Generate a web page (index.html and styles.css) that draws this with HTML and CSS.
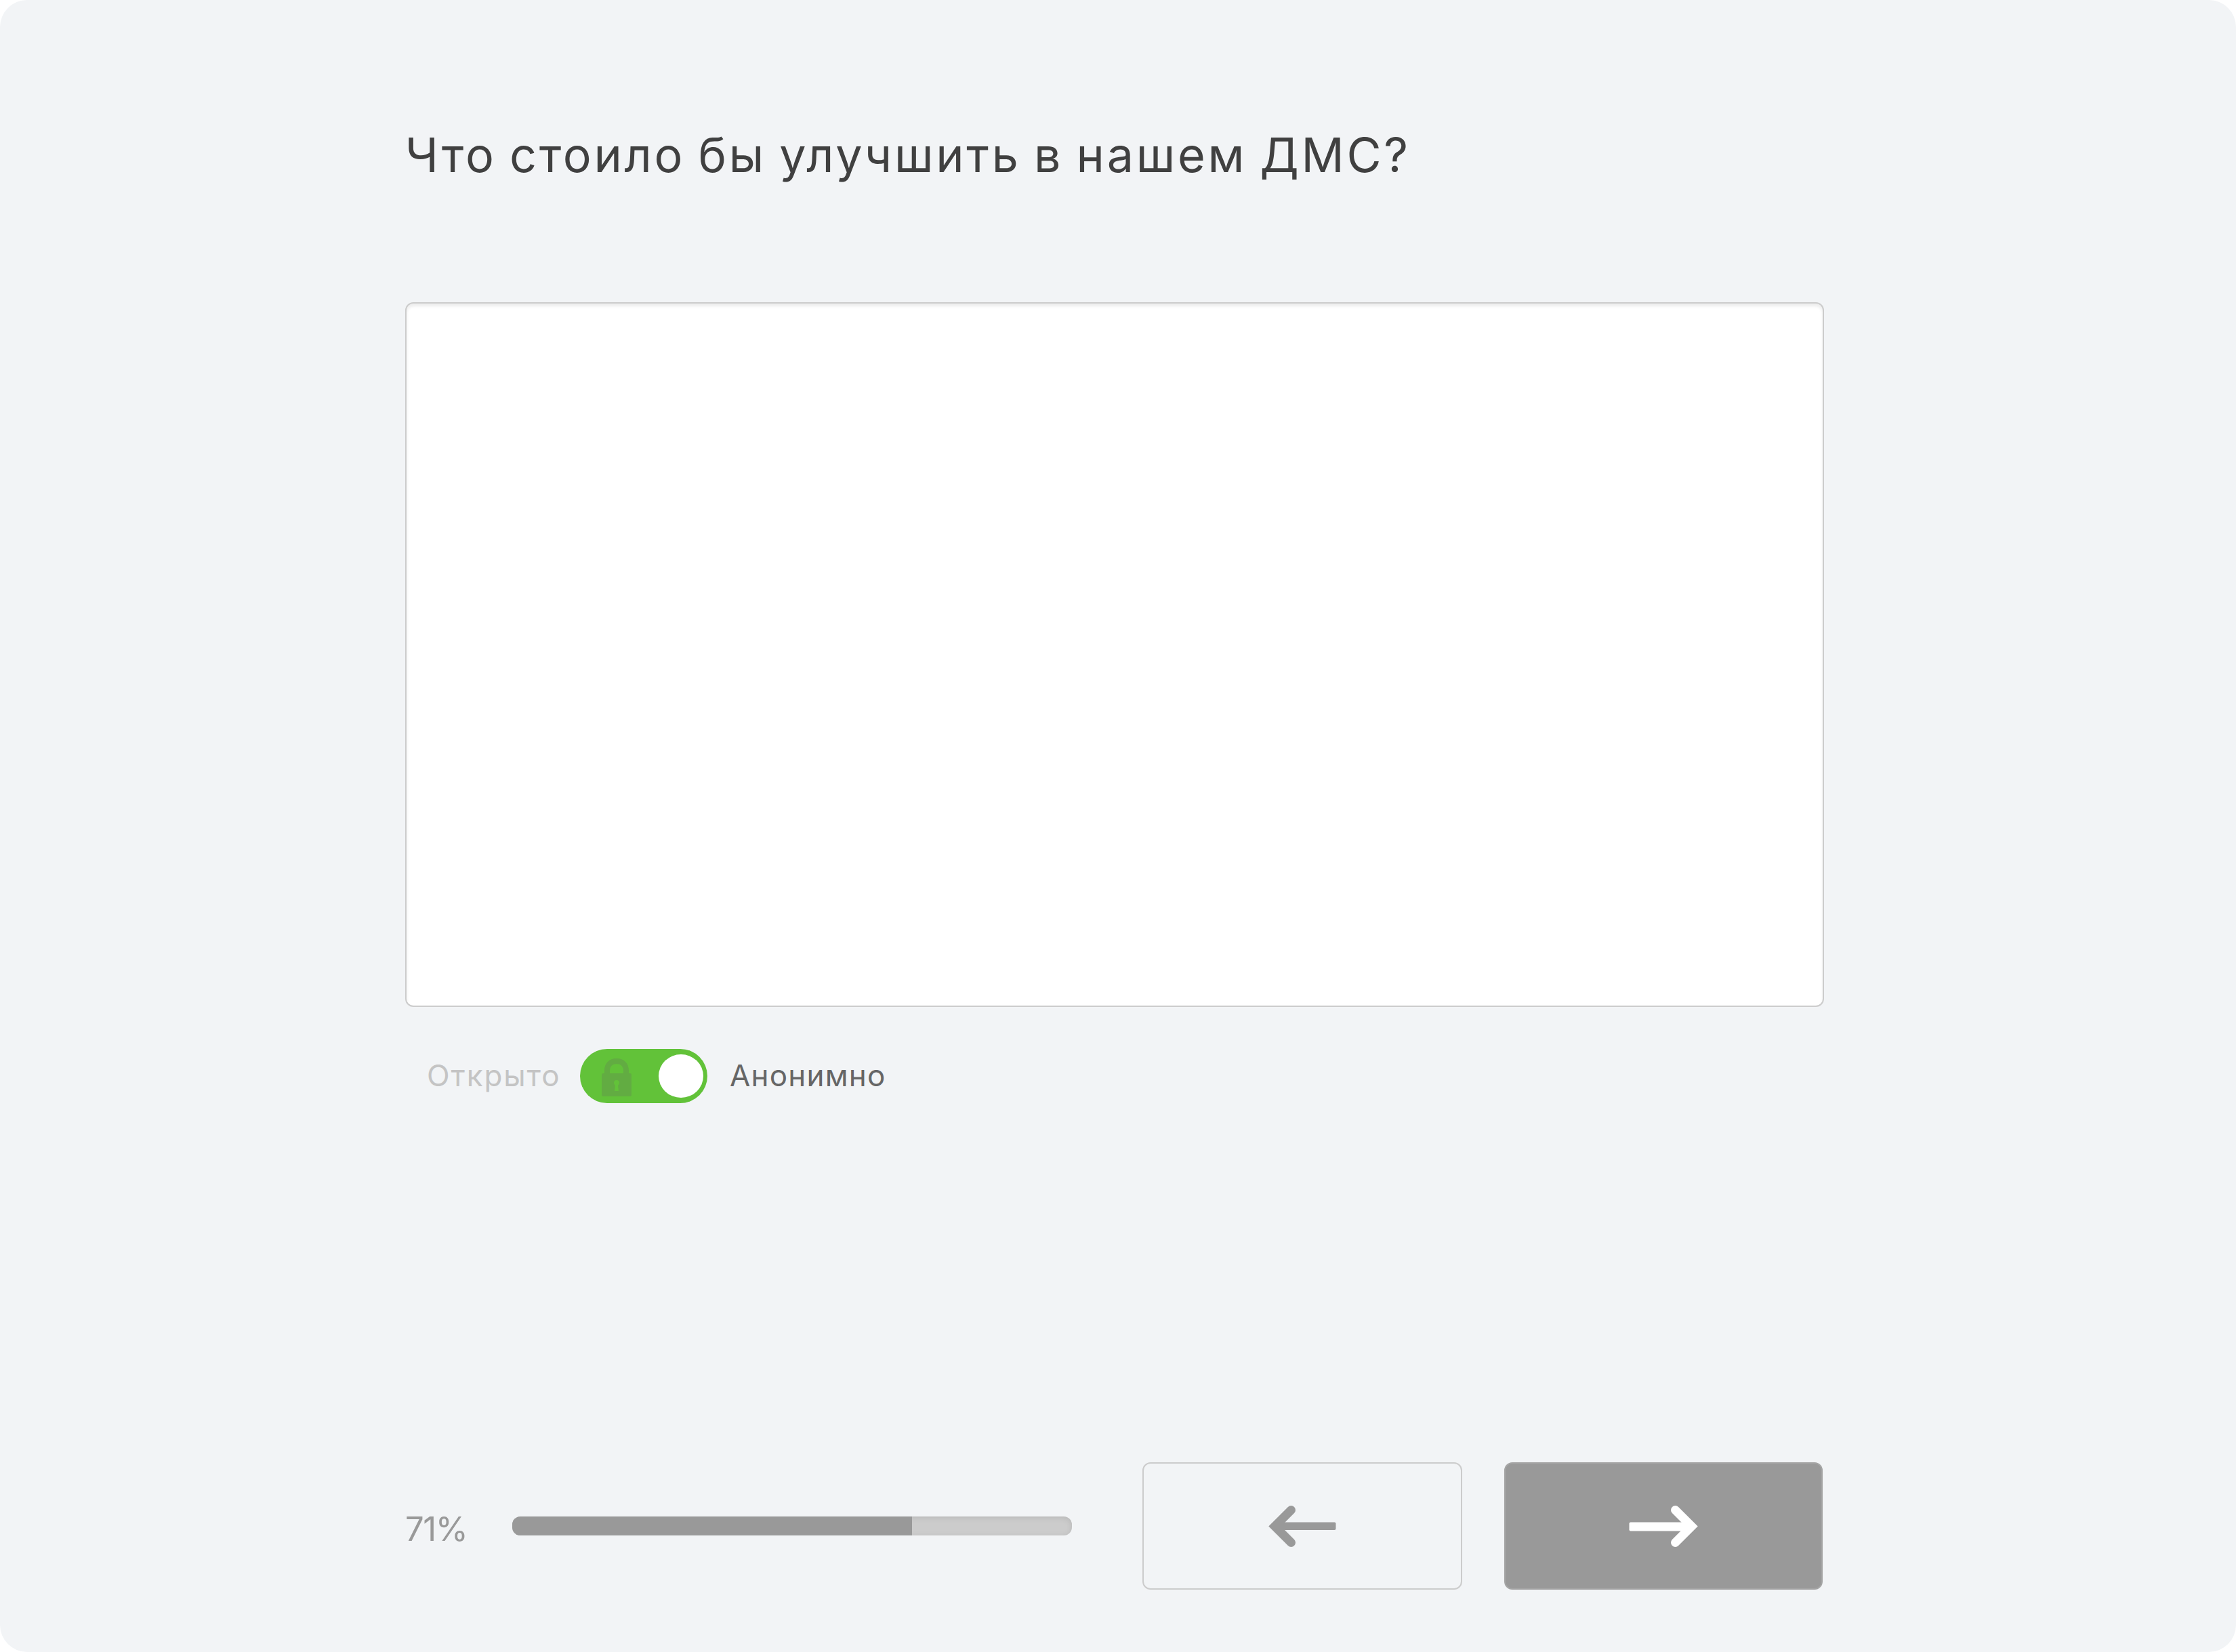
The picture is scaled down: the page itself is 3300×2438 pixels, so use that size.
FILE: index.html
```html
<!DOCTYPE html>
<html lang="ru">
<head>
  <meta charset="UTF-8">
  <meta name="viewport" content="width=device-width, initial-scale=1.0">
  <title>Опрос</title>
  <link rel="stylesheet" href="styles.css">
</head>
<body>
  <main class="survey">
    <h1 class="question">Что стоило бы улучшить в нашем ДМС?</h1>

    <textarea class="answer" aria-label="Ответ"></textarea>

    <div class="privacy">
      <span class="privacy-open">Открыто</span>
      <button class="switch" type="button" role="switch" aria-checked="true" aria-label="Анонимно">
        <svg class="lock" viewBox="0 0 44 56">
          <path fill-rule="evenodd" d="M4 22V18C4 7 11 0 22 0S40 7 40 18V22H42Q44 22 44 24V54Q44 56 42 56H2Q0 56 0 54V24Q0 22 2 22ZM12 22H32V18C32 12 28 8 22 8S12 12 12 18ZM22 32C19 32 18 34 18 36Q18 38 20 40L19 48H25L24 40Q26 38 26 36C26 34 25 32 22 32Z"/>
        </svg>
        <span class="knob"></span>
      </button>
      <span class="privacy-anonymous">Анонимно</span>
    </div>

    <footer class="footer">
      <span class="percent">71%</span>
      <div class="progress">
        <div class="progress-bar" style="width: 71.43%"></div>
      </div>
      <button class="nav-button prev" type="button" aria-label="Назад">
        <svg class="arrow" viewBox="0 0 100 64">
          <path d="M33.5 8.5L9.5 32.5L33.5 56.5"/>
          <rect x="10" y="26.5" width="89.5" height="11.5" rx="2"/>
        </svg>
      </button>
      <button class="nav-button next" type="button" aria-label="Далее">
        <svg class="arrow" viewBox="0 0 100 64">
          <path d="M67.5 8.5L91.5 32.5L67.5 56.5"/>
          <rect x="-0.5" y="26.5" width="91" height="13" rx="2"/>
        </svg>
      </button>
    </footer>
  </main>
</body>
</html>
```

FILE: styles.css
```css
* {
  box-sizing: border-box;
}

body {
  margin: 0;
  background: #fff;
  font-family: Inter, "Open Sans", sans-serif;
}

.survey {
  display: flex;
  flex-direction: column;
  height: 2438px;
  padding: 180px 608px 92px 598px;
  border-radius: 40px;
  background: #f2f4f6;
}

.question {
  height: 266px;
  margin: 0;
  font-size: 70px;
  font-weight: 400;
  line-height: 98px;
  letter-spacing: 3.7px;
  word-spacing: -4px;
  white-space: nowrap;
  color: #404040;
}

.answer {
  display: block;
  width: 2094px;
  height: 1040px;
  border: 2px solid #ccc;
  border-radius: 12px;
  background: #fff;
  box-shadow: inset 0 4px 4px rgba(0, 0, 0, 0.075);
  resize: none;
}

.privacy {
  display: flex;
  align-items: center;
  height: 80px;
  margin-top: 62px;
  padding-left: 32px;
  font-size: 44px;
  white-space: nowrap;
}

.privacy-open {
  width: 226px;
  padding-bottom: 3px;
  letter-spacing: 1.9px;
  color: #c4c4c4;
}

.privacy-anonymous {
  margin-left: 33px;
  padding-bottom: 3px;
  letter-spacing: 1.2px;
  color: #666;
}

.switch {
  display: flex;
  align-items: center;
  justify-content: space-between;
  width: 188px;
  height: 80px;
  padding: 0 6px 0 32px;
  border: 0;
  border-radius: 40px;
  background: #62c239;
}

.lock {
  width: 44px;
  height: 56px;
  margin-top: 4px;
  fill: #62ac42;
}

.knob {
  width: 66px;
  height: 64px;
  border-radius: 50%;
  background: #fff;
}

.footer {
  display: flex;
  align-items: center;
  height: 188px;
  margin-top: auto;
}

.percent {
  width: 158px;
  padding-top: 8px;
  font-size: 49px;
  letter-spacing: -1.5px;
  color: #999;
}

.progress {
  width: 826px;
  height: 28px;
  margin-right: 104px;
  overflow: hidden;
  border-radius: 12px;
  background: #ccc;
  box-shadow: inset 0 2px 8px rgba(0, 0, 0, 0.1);
}

.progress-bar {
  height: 100%;
  background: #999;
}

.nav-button {
  display: flex;
  align-items: center;
  justify-content: center;
  width: 472px;
  height: 188px;
  padding: 0;
  border: 2px solid #ccc;
  border-radius: 12px;
}

.prev {
  background: transparent;
  color: #999;
}

.next {
  width: 470px;
  margin-left: 62px;
  border-color: #a5a5a5;
  background: #999;
  color: #fff;
}

.arrow {
  width: 100px;
  height: 64px;
  overflow: visible;
  fill: currentColor;
}

.arrow path {
  fill: none;
  stroke: currentColor;
  stroke-width: 13;
  stroke-linecap: round;
  stroke-linejoin: miter;
}
```
